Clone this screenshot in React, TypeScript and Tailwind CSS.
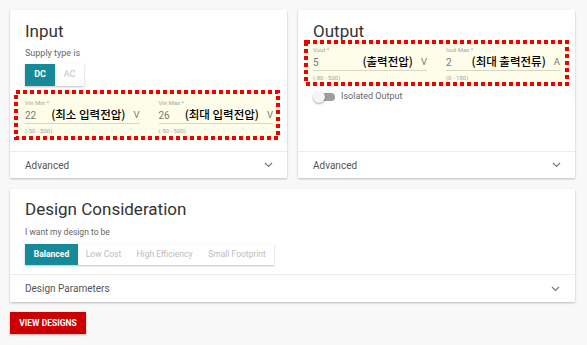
import React from "react";

const font = { fontFamily: "Roboto, 'Noto Sans CJK KR', sans-serif" };

function Chevron() {
  return (
    <svg width="9" height="6" viewBox="0 0 9 6" className="text-[#777]">
      <path d="M1 1l3.5 3.5L8 1" fill="none" stroke="currentColor" strokeWidth="1.2" />
    </svg>
  );
}

function DashBox({ w, h }: { w: number; h: number }) {
  return (
    <svg width={w} height={h} className="absolute left-0 top-0 pointer-events-none">
      <rect
        x="2"
        y="2"
        width={w - 4}
        height={h - 4}
        fill="none"
        stroke="#ee0000"
        strokeWidth="4"
        strokeDasharray="4 3"
      />
    </svg>
  );
}

interface FieldProps {
  label: string;
  value: string;
  note: string;
  unit: string;
  range: string;
}

function Field({ label, value, note, unit, range }: FieldProps) {
  return (
    <div className="flex-1">
      <div className="text-[6px] leading-[8px] text-[#a5a5a0]">{label}</div>
      <div className="flex items-center h-[17px] border-b-[1.5px] border-[#d8d7c4]">
        <span className="text-[10px] text-[#777]">{value}</span>
        <span
          className="ml-auto mr-[8px] text-[11.5px] font-medium text-black"
          style={{ fontFamily: "'Noto Sans CJK KR', sans-serif" }}
        >
          {note}
        </span>
        <span className="text-[9.5px] text-[#777]">{unit}</span>
      </div>
      <div className="mt-[3px] text-[6px] leading-[8px] text-[#a5a5a0]">{range}</div>
    </div>
  );
}

function Footer({ label }: { label: string }) {
  return (
    <div className="h-[27px] border-t border-[#ececec] flex items-center justify-between pl-[15px] pr-[14px]">
      <span className="text-[10px] text-[#555]">{label}</span>
      <Chevron />
    </div>
  );
}

export default function App() {
  return (
    <div className="w-[587px] h-[345px] bg-[#f8f8f8] pt-[10px] pl-[10px]" style={font}>
      <div className="flex gap-[11px] w-[565px]">
        {/* Input card */}
        <div className="w-[277px] h-[168px] bg-white shadow-[0_1px_2px_rgba(0,0,0,0.25)] flex flex-col">
          <div className="flex-1 pt-[11px] px-[15px]">
            <div className="text-[17px] leading-[20px] text-[#333]">Input</div>
            <div className="mt-[7px] text-[9px] leading-[11px] text-[#666]">Supply type is</div>
            <div className="mt-[5px] flex w-[59px] h-[22px] shadow-[0_1px_2px_rgba(0,0,0,0.25)]">
              <div className="w-[30px] bg-[#168a99] text-white text-[9px] font-bold flex items-center justify-center">
                DC
              </div>
              <div className="flex-1 bg-white text-[#c3c3c3] text-[9px] flex items-center justify-center">
                AC
              </div>
            </div>
            <div className="relative mt-[4px] -ml-[11px] w-[266px] h-[50px] bg-[#fefde9] pl-[11px] pr-[7px] pt-[9px]">
              <div className="flex gap-[19px]">
                <Field label="Vin Min *" value="22" note="(최소 입력전압)" unit="V" range="(-50 - 500)" />
                <Field label="Vin Max *" value="26" note="(최대 입력전압)" unit="V" range="(-50 - 500)" />
              </div>
              <DashBox w={266} h={50} />
            </div>
          </div>
          <Footer label="Advanced" />
        </div>

        {/* Output card */}
        <div className="w-[277px] h-[168px] bg-white shadow-[0_1px_2px_rgba(0,0,0,0.25)] flex flex-col">
          <div className="flex-1 pt-[11px] px-[15px]">
            <div className="text-[17px] leading-[20px] text-[#333]">Output</div>
            <div className="relative -mt-[1px] -ml-[9px] w-[265px] h-[46px] bg-[#fefde9] pl-[9px] pr-[9px] pt-[6px]">
              <div className="flex gap-[19px]">
                <Field label="Vout *" value="5" note="(출력전압)" unit="V" range="(-80 - 500)" />
                <Field label="Iout Max *" value="2" note="(최대 출력전류)" unit="A" range="(0 - 180)" />
              </div>
              <DashBox w={265} h={46} />
            </div>
            <div className="mt-[4px] flex items-center">
              <div className="relative w-[22px] h-[10px]">
                <div className="absolute left-[3px] top-[1px] w-[19px] h-[8px] rounded-full bg-[#9e9e9e]" />
                <div className="absolute left-0 -top-[1px] w-[12px] h-[12px] rounded-full bg-[#f5f5f5] shadow-[0_1px_2px_rgba(0,0,0,0.35)]" />
              </div>
              <span className="ml-[6px] text-[9px] text-[#666]">Isolated Output</span>
            </div>
          </div>
          <Footer label="Advanced" />
        </div>
      </div>

      {/* Design consideration */}
      <div className="mt-[11px] w-[565px] h-[113px] bg-white shadow-[0_1px_2px_rgba(0,0,0,0.25)] flex flex-col">
        <div className="flex-1 pt-[10px] px-[15px]">
          <div className="text-[17px] leading-[20px] text-[#333]">Design Consideration</div>
          <div className="mt-[8px] text-[8.5px] leading-[11px] text-[#666]">I want my design to be</div>
          <div className="mt-[6px] flex w-[249px] h-[21px] shadow-[0_1px_2px_rgba(0,0,0,0.25)] text-[8.5px]">
            <div className="w-[53px] bg-[#168a99] text-white font-bold flex items-center justify-center">
              Balanced
            </div>
            <div className="w-[51px] text-[#bdbdbd] flex items-center justify-center">Low Cost</div>
            <div className="w-[71px] text-[#bdbdbd] flex items-center justify-center">High Efficiency</div>
            <div className="flex-1 text-[#bdbdbd] flex items-center justify-center">Small Footprint</div>
          </div>
        </div>
        <div className="h-[28px] border-t border-[#ececec] flex items-center justify-between pl-[15px] pr-[15px]">
          <span className="text-[10px] text-[#555]">Design Parameters</span>
          <Chevron />
        </div>
      </div>

      <button className="mt-[10px] w-[76px] h-[22px] bg-[#cc0000] text-white text-[8.5px] font-bold shadow-[0_1px_2px_rgba(0,0,0,0.3)] flex items-center justify-center">
        VIEW DESIGNS
      </button>
    </div>
  );
}
